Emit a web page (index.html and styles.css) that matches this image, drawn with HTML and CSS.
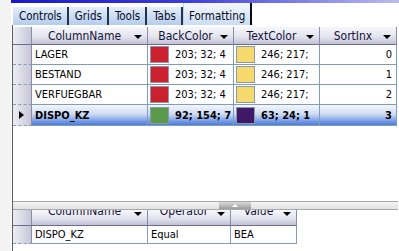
FILE: index.html
```html
<!DOCTYPE html>
<html lang="en">
<head>
    <meta charset="UTF-8">
    <title>Formatting</title>
    <link rel="stylesheet" href="styles.css">
</head>
<body>
    <div class="gutter"></div>
    <div class="main">
        <div class="topbar"></div>
        <div class="tabs">
            <div class="tab">Controls</div>
            <div class="tab">Grids</div>
            <div class="tab">Tools</div>
            <div class="tab">Tabs</div>
            <div class="tab active">Formatting</div>
        </div>

        <div class="panel">
            <div class="grid top-grid">
                <div class="hdr corner"></div>
                <div class="hdr">ColumnName<span class="arrow"></span></div>
                <div class="hdr">BackColor<span class="arrow"></span></div>
                <div class="hdr">TextColor<span class="arrow"></span></div>
                <div class="hdr">SortInx<span class="arrow"></span></div>

                <div class="rh"></div>
                <div class="cell">LAGER</div>
                <div class="cell"><span class="swatch red"></span>203; 32; 4</div>
                <div class="cell"><span class="swatch yellow"></span>246; 217;</div>
                <div class="cell num">0</div>

                <div class="rh"></div>
                <div class="cell">BESTAND</div>
                <div class="cell"><span class="swatch red"></span>203; 32; 4</div>
                <div class="cell"><span class="swatch yellow"></span>246; 217;</div>
                <div class="cell num">1</div>

                <div class="rh"></div>
                <div class="cell">VERFUEGBAR</div>
                <div class="cell"><span class="swatch red"></span>203; 32; 4</div>
                <div class="cell"><span class="swatch yellow"></span>246; 217;</div>
                <div class="cell num">2</div>

                <div class="rh current"><span class="pointer"></span></div>
                <div class="cell sel">DISPO_KZ</div>
                <div class="cell sel"><span class="swatch green"></span>92; 154; 7</div>
                <div class="cell sel"><span class="swatch purple"></span>63; 24; 1</div>
                <div class="cell sel num">3</div>
            </div>

            <div class="empty"></div>

            <div class="splitter"><span class="grip"></span></div>

            <div class="grid bottom-grid">
                <div class="hdr corner short"></div>
                <div class="hdr short">ColumnName<span class="arrow"></span></div>
                <div class="hdr short">Operator<span class="arrow"></span></div>
                <div class="hdr short">Value<span class="arrow"></span></div>

                <div class="rh"></div>
                <div class="cell">DISPO_KZ</div>
                <div class="cell">Equal</div>
                <div class="cell">BEA</div>
            </div>
            <div class="tail"></div>
        </div>
    </div>
</body>
</html>
```

FILE: styles.css
```css
body {
    margin: 0;
    width: 399px;
    height: 251px;
    overflow: hidden;
    display: flex;
    background-color: #ffffff;
    font-family: "DejaVu Sans Condensed", "DejaVu Sans", sans-serif;
    font-stretch: condensed;
    font-size: 11px;
    color: #000;
}

.gutter {
    width: 11px;
    background-color: #f4f4f4;
    flex-shrink: 0;
}

.main {
    flex: 1;
    display: flex;
    flex-direction: column;
}

.topbar {
    height: 3px;
    background: linear-gradient(to right, #1a1ac8, #3c3cd8 45%, #bcbcf0);
}

.tabs {
    display: flex;
    align-items: flex-end;
    padding: 0 0 0 2px;
    height: 22px;
}

.tab {
    height: 18px;
    padding: 0 5px 0 6px;
    line-height: 18px;
    font-size: 11.5px;
    color: #0a0a20;
    background: linear-gradient(#e4eefb, #b4cdef);
    border-right: 2px solid #24324a;
    box-sizing: border-box;
}

.tab.active {
    height: 22px;
    padding: 4px 5px 0 5px;
    background: linear-gradient(#f4f8fe, #c9ddf5);
    border-left: 1px solid #c0d4ee;
    border-right: 2px solid #0c0c0c;
}

.panel {
    flex: 1;
    display: flex;
    flex-direction: column;
    border-left: 1px solid #5e5e5e;
    margin-left: 1px;
    min-height: 0;
}

.grid {
    display: grid;
}

.top-grid {
    grid-template-columns: 19px 116px 86px 86px 77px;
    border-top: 2px solid #ffffff;
}

.bottom-grid {
    grid-template-columns: 19px 116px 83px 66px;
    width: 284px;
}

.hdr {
    height: 18px;
    line-height: 18px;
    font-size: 12px;
    text-align: center;
    position: relative;
    background: linear-gradient(#f6f6fb, #e4e4ef 55%, #c2c2d6);
    border-right: 1px solid #8c8ca8;
    border-bottom: 1px solid #6c6c8c;
    box-sizing: border-box;
    color: #14143a;
    white-space: nowrap;
    padding-right: 10px;
}

.hdr.short {
    height: 16px;
    line-height: 3px;
    overflow: hidden;
}

.hdr.corner {
    padding: 0;
    background: linear-gradient(to right, #ededf3, #c6c6d8);
}

.arrow {
    position: absolute;
    right: 5px;
    top: 8px;
    border-left: 4px solid transparent;
    border-right: 4px solid transparent;
    border-top: 4px solid #000;
}

.hdr.short .arrow {
    top: 2px;
}

.rh {
    background: linear-gradient(to right, #ededf3, #c6c6d8);
    border-right: 1px solid #8c8ca8;
    border-bottom: 1px dashed #7f9db9;
    height: 20px;
    box-sizing: border-box;
    position: relative;
}

.pointer {
    position: absolute;
    left: 6px;
    top: 6px;
    border-top: 4px solid transparent;
    border-bottom: 4px solid transparent;
    border-left: 5px solid #000;
}

.cell {
    height: 20px;
    box-sizing: border-box;
    padding-left: 3px;
    border-right: 1px solid #7f9db9;
    border-bottom: 1px solid #7f9db9;
    white-space: nowrap;
    overflow: hidden;
    display: flex;
    align-items: center;
    gap: 6px;
}

.cell.num {
    justify-content: flex-end;
    padding-right: 4px;
}

.rh.current,
.cell.sel {
    height: 21px;
}

.cell.sel {
    font-weight: bold;
    background: linear-gradient(#f2f6fd, #cfdcf4 45%, #6c94e4 85%, #4c7cdc);
}

.swatch {
    width: 19px;
    height: 17px;
    margin-left: -1px;
    box-sizing: border-box;
    border: 1px solid #8a9aac;
    flex-shrink: 0;
}

.red { background-color: #cb202d; }
.yellow { background-color: #f6d96c; }
.green { background-color: #5c9a4b; }
.purple { background-color: #3f1868; }

.empty {
    flex: 1;
}

.splitter {
    height: 7px;
    border-top: 1px solid #a8a8a8;
    border-bottom: 1px solid #a8a8a8;
    background: linear-gradient(#f4f4f4, #e2e2e2);
    margin-right: 1px;
    position: relative;
}

.grip {
    position: absolute;
    left: 206px;
    top: 0;
    width: 32px;
    height: 7px;
    background: linear-gradient(#dadada, #9c9c9c);
}

.grip::after {
    content: "";
    position: absolute;
    left: 13px;
    top: 2px;
    border-left: 3px solid transparent;
    border-right: 3px solid transparent;
    border-bottom: 3px solid #fff;
}

.bottom-grid .rh,
.bottom-grid .cell {
    height: 18px;
}

.tail {
    height: 7px;
}
```
